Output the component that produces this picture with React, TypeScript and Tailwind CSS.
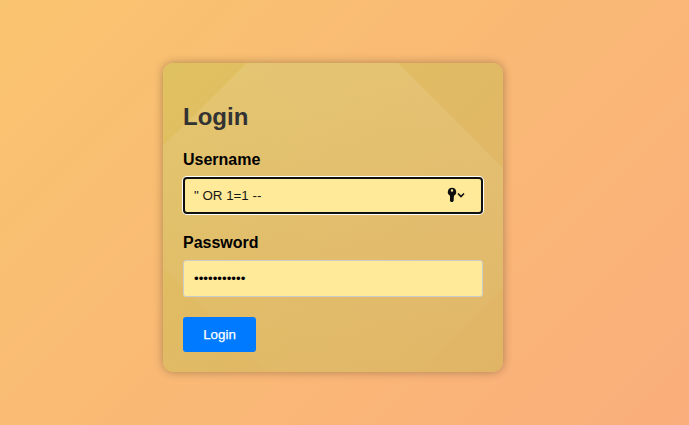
import React from "react";

function CardFacets() {
  return (
    <svg
      className="pointer-events-none absolute inset-0 h-full w-full"
      viewBox="0 0 340 309"
      preserveAspectRatio="none"
      aria-hidden="true"
    >
      <defs>
        <linearGradient id="facet" x1="0" y1="0" x2="0" y2="1">
          <stop offset="0" stopColor="#f0d6a0" stopOpacity="0.27" />
          <stop offset="0.55" stopColor="#e6cc8c" stopOpacity="0.2" />
          <stop offset="1" stopColor="#e2c070" stopOpacity="0.16" />
        </linearGradient>
      </defs>
      <path d="M84 0H235L340 105V225L255 309H104L0 205V83Z" fill="url(#facet)" />
    </svg>
  );
}

function KeyIcon() {
  return (
    <svg className="h-4 w-[19px]" viewBox="0 0 19 16" aria-hidden="true">
      <path
        fillRule="evenodd"
        fill="#101010"
        d="M5 0.800a4.200 4.200 0 0 1 2 7.900V10L6.500 10.700 7 11.400 6.500 12.200 7 13 5.800 14.900H4L3 14V8.700A4.200 4.200 0 0 1 5 0.800ZM5 2.300a1.200 1.200 0 1 0 0 2.400 1.200 1.200 0 0 0 0-2.400Z"
      />
      <path d="M11 6.500l3 3 3-3" fill="none" stroke="#101010" strokeWidth="1.700" />
    </svg>
  );
}

export default function App() {
  return (
    <main className="flex h-[425px] w-[689px] flex-col items-start bg-[linear-gradient(135deg,#f9c46f_0%,#faae7b_100%)] pl-[163px] pt-[63px] font-['Liberation_Sans',Arial,sans-serif]">
      <section className="relative h-[309px] w-[340px] rounded-[10px] bg-[linear-gradient(135deg,#e0c160_0%,#e1b866_65%,#e1b566_100%)] shadow-[0_0_10px_rgba(0,0,0,0.3)]">
        <CardFacets />
        <form
          className="relative flex flex-col items-start px-5 pt-10"
          onSubmit={(event) => event.preventDefault()}
        >
          <h2 className="text-2xl leading-[27px] font-bold text-[#333]">Login</h2>
          <label className="mt-[21px] text-base leading-[18px] font-bold text-black">Username</label>
          <div className="mt-2 flex h-[37px] w-[300px] items-center justify-between rounded-[4px] border-2 border-[#101010] bg-[#ffea9a] pr-[15px] pl-[9px] shadow-[0_0_0_1px_white]">
            <span className="text-[13.33px] leading-[15px] text-[#171717]">&quot; OR 1=1 --</span>
            <div className="pb-0.5">
              <KeyIcon />
            </div>
          </div>
          <label className="mt-5 text-base leading-[18px] font-bold text-black">Password</label>
          <div className="mt-2 flex h-[37px] w-[300px] items-center rounded-[3px] border border-[#ccc] bg-[#ffea9a] px-[10px]">
            <span className="text-[13.33px] leading-[15px] text-black">•••••••••••</span>
          </div>
          <button className="mt-5 h-[35px] w-[73px] rounded-[3px] bg-[#007bff] text-[13.33px] leading-[15px] text-white [-webkit-text-stroke:0.25px_white]">
            Login
          </button>
        </form>
      </section>
    </main>
  );
}
